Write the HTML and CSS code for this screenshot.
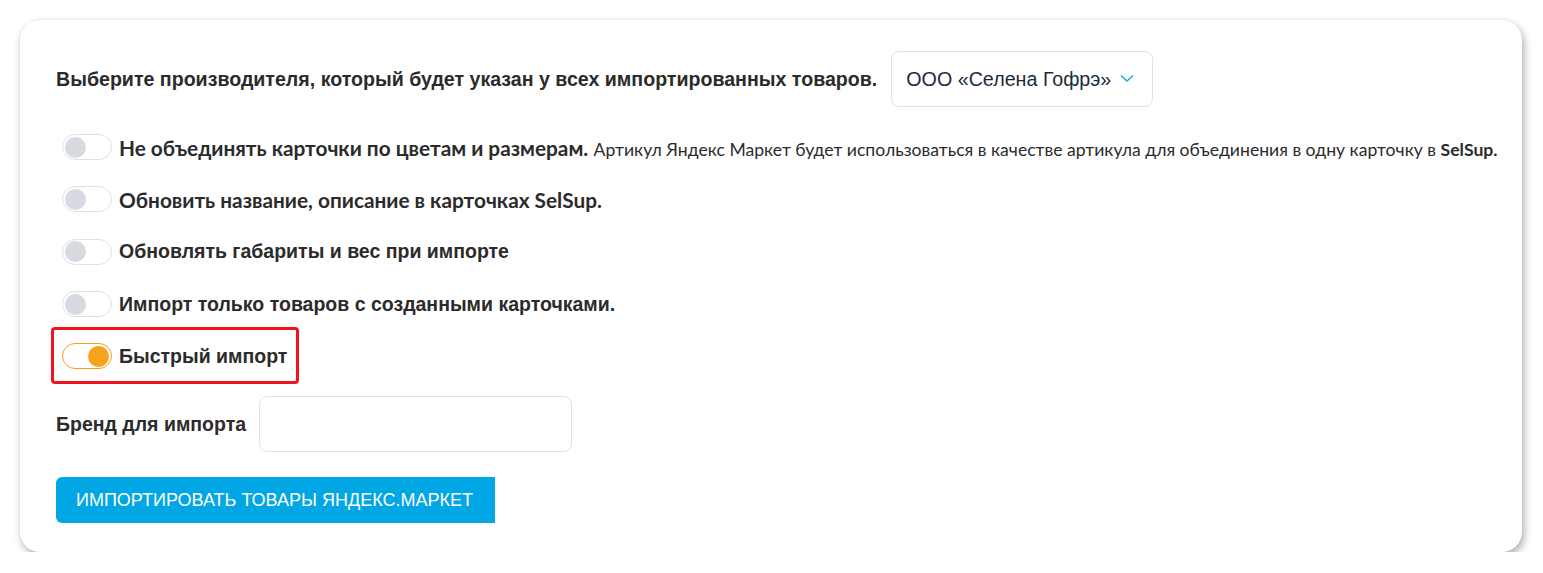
FILE: index.html
```html
<!DOCTYPE html>
<html lang="ru">
<head>
<meta charset="utf-8">
<link rel="stylesheet" href="styles.css">
</head>
<body>
<div class="card">
  <div class="maker-row">
    <span class="maker-label">Выберите производителя, который будет указан у всех импортированных товаров.</span>
    <div class="select">
      <span class="select-value">ООО «Селена Гофрэ»</span>
      <svg class="chevron" width="14" height="9" viewBox="0 0 14 9"><path d="M1 1.5 L7 7 L13 1.5" fill="none" stroke="#1aa7e0" stroke-width="1.5"/></svg>
    </div>
  </div>

  <div class="options">
    <div class="opt">
      <span class="switch"><span class="knob"></span></span>
      <span class="opt-label lato"><b>Не объединять карточки по цветам и размерам.</b> <span class="hint">Артикул Яндекс Маркет будет использоваться в качестве артикула для объединения в одну карточку в <b>SelSup.</b></span></span>
    </div>
    <div class="opt">
      <span class="switch"><span class="knob"></span></span>
      <span class="opt-label lato"><b>Обновить название, описание в карточках SelSup.</b></span>
    </div>
    <div class="opt">
      <span class="switch"><span class="knob"></span></span>
      <span class="opt-label">Обновлять габариты и вес при импорте</span>
    </div>
    <div class="opt">
      <span class="switch"><span class="knob"></span></span>
      <span class="opt-label">Импорт только товаров с созданными карточками.</span>
    </div>
    <div class="opt highlighted">
      <span class="switch on"><span class="knob"></span></span>
      <span class="opt-label">Быстрый импорт</span>
    </div>
  </div>

  <div class="brand-row">
    <span class="brand-label">Бренд для импорта</span>
    <div class="input"></div>
  </div>

  <button class="import-btn">ИМПОРТИРОВАТЬ ТОВАРЫ ЯНДЕКС.МАРКЕТ</button>
</div>
</body>
</html>
```

FILE: styles.css
```css
* { box-sizing: border-box; }
html, body { margin: 0; padding: 0; background: #ffffff; }
body {
  padding: 20px 0 0 20px;
  font-family: "Liberation Sans", Arial, sans-serif;
  color: #2b2b2b;
}
.card {
  width: 1502px;
  height: 532px;
  background: #fff;
  border-radius: 20px;
  box-shadow: 2px 4px 8px rgba(0,0,0,0.32), 0 0 2px rgba(0,0,0,0.08);
  padding: 31px 36px 0 36px;
  display: flex;
  flex-direction: column;
  align-items: flex-start;
}
.maker-row {
  display: flex;
  align-items: center;
  gap: 14px;
}
.maker-label {
  font-weight: bold;
  font-size: 19.6px;
}
.select {
  width: 262px;
  height: 56px;
  border: 1px solid #dfe3e8;
  border-radius: 8px;
  display: flex;
  align-items: center;
  padding-left: 14px;
  gap: 9px;
}
.select-value {
  font-size: 19.7px;
  color: #1b2a3c;
}
.chevron { margin-top: -2px; }

.options {
  display: flex;
  flex-direction: column;
  align-items: flex-start;
  margin-top: 14px;
}
.opt {
  position: relative;
  height: 52.3px;
  display: flex;
  align-items: center;
  padding-left: 6px;
  gap: 7px;
}
.switch {
  width: 50px;
  height: 26px;
  border: 1px solid #dde2e7;
  border-radius: 13px;
  background: #fff;
  display: flex;
  align-items: center;
  padding: 0 2px;
  flex: none;
}
.knob {
  width: 21px;
  height: 21px;
  border-radius: 50%;
  background: #d5dbe0;
}
.switch.on {
  border-color: #f7a21b;
  justify-content: flex-end;
}
.switch.on .knob { background: #f7a21b; }
.opt-label {
  font-weight: bold;
  font-size: 19.5px;
  color: #2b2b2b;
  white-space: nowrap;
}
.opt-label.lato {
  font-family: Lato, "Liberation Sans", sans-serif;
  font-weight: normal;
  font-size: 20.8px;
}
.opt-label.lato b { font-weight: bold; }
.hint { font-size: 17.6px; }
.highlighted::after {
  content: "";
  position: absolute;
  left: -5px;
  right: -12px;
  top: -3px;
  bottom: -2px;
  border: 3px solid #f0141e;
  border-radius: 4px;
}

.brand-row {
  display: flex;
  align-items: center;
  gap: 13px;
  margin-top: 14px;
}
.brand-label {
  font-weight: bold;
  font-size: 19.5px;
}
.input {
  width: 313px;
  height: 56px;
  border: 1px solid #dfe3e8;
  border-radius: 8px;
}
.import-btn {
  margin-top: 25px;
  width: 439px;
  height: 46px;
  border: none;
  border-radius: 6px 0 0 6px;
  background: #00a7e4;
  color: #fff;
  font-family: "Liberation Sans", Arial, sans-serif;
  font-size: 18px;
  padding: 0 20px;
  text-align: left;
}
```
